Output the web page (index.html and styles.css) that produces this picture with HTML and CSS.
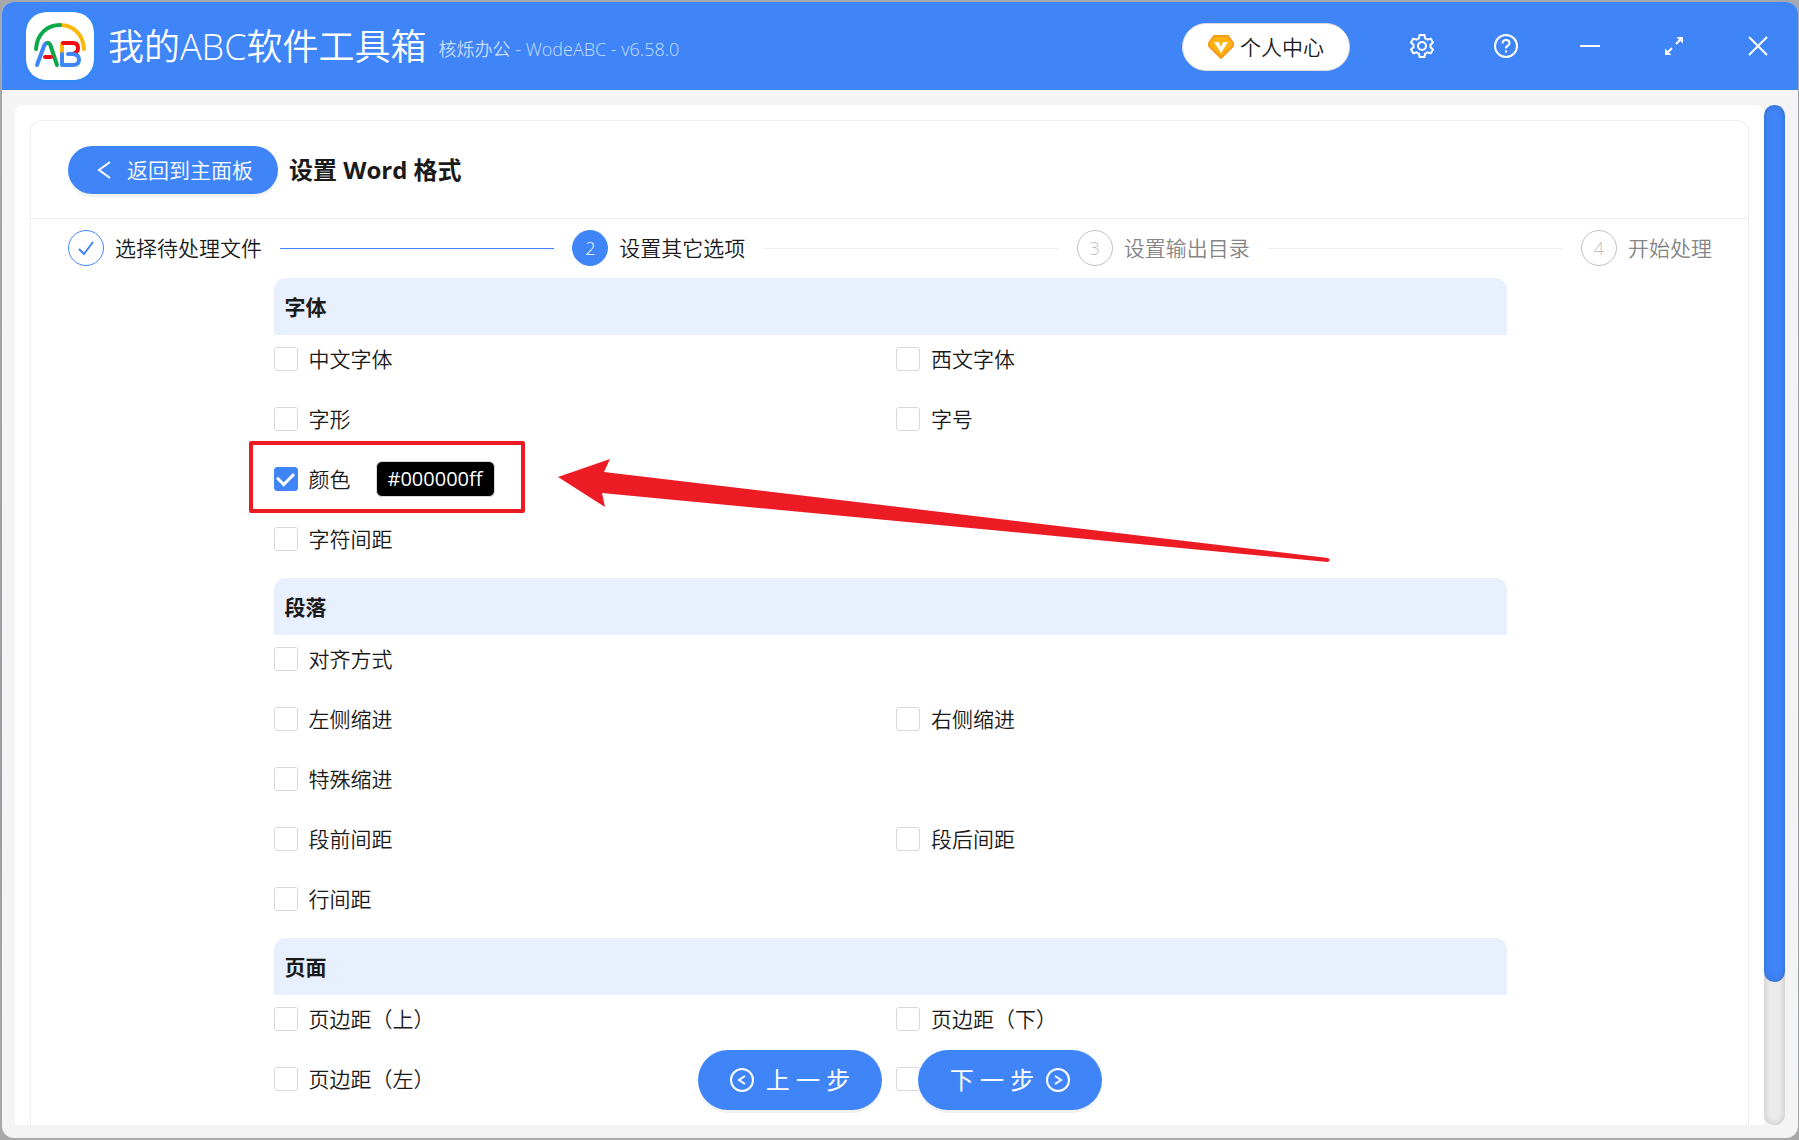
FILE: index.html
```html
<!DOCTYPE html>
<html lang="zh-CN">
<head>
<meta charset="utf-8">
<title>我的ABC软件工具箱</title>
<link rel="stylesheet" href="styles.css">
</head>
<body>
<div class="window">
  <header class="titlebar">
    <svg class="logo" viewBox="0 0 68 68" aria-hidden="true">
      <rect width="68" height="68" rx="20" fill="#fff"/>
      <g fill="none" stroke-width="4" stroke-linecap="round" stroke-linejoin="round">
        <path d="M34 13c13 0 23 9 24 24" stroke="#fbb80b"/>
        <path d="M10 37c1-15 11-24 24-24" stroke="#0aa84a"/>
        <path d="M11 53l7-19q1-3 4-3" stroke="#3f87f8"/>
        <path d="M22 31q2 0 3 4l6 18" stroke="#0aa84a"/>
        <path d="M19 45h6" stroke="#f20a12"/>
        <path d="M36 46v-14" stroke="#fbb80b"/>
        <path d="M37 31h10q5 0 5 5t-6 6" stroke="#f20a12"/>
        <path d="M36 42v11h11q6 0 6-5.500t-7-5.500h-4" stroke="#3f87f8"/>
      </g>
    </svg>
    <h1 class="app-name">我的ABC软件工具箱</h1>
    <span class="app-version">核烁办公 - WodeABC - v6.58.0</span>
    <button class="account" type="button">
      <svg class="gem" viewBox="0 0 26 24" aria-hidden="true">
        <path d="M6 1h14l5 7v3L13 23 1 11V8z" fill="#ffb310" stroke="#f79a1d" stroke-width="2" stroke-linejoin="round"/>
        <path d="M6 7h5l2 5 2-5h5l-7 11z" fill="#fff"/>
      </svg>
      个人中心
    </button>
    <nav class="window-tools">
      <button class="tool" type="button" aria-label="设置">
        <svg viewBox="0 0 24 24"><path d="M9.600 1h4.800l.7 3.300 2.400 1.400 3.200-1.100 2.300 4-2.500 2.200v2.400l2.500 2.200-2.300 4-3.200-1.100-2.400 1.400-.7 3.300H9.600l-.7-3.300-2.400-1.400-3.200 1.100-2.300-4 2.500-2.200v-2.400L1 8.600l2.300-4 3.200 1.100 2.400-1.400z"/><circle cx="12" cy="12" r="4"/></svg>
      </button>
      <button class="tool" type="button" aria-label="帮助">
        <svg viewBox="0 0 24 24"><circle cx="12" cy="12" r="11"/><path d="M8.500 9.500q0-3.500 3.500-3.500t3.500 3q0 2-2 3t-1.500 2.500"/><path d="M12 16.500v2"/></svg>
      </button>
      <button class="tool" type="button" aria-label="最小化">
        <svg viewBox="0 0 24 24"><path d="M2 12h20"/></svg>
      </button>
      <button class="tool" type="button" aria-label="最大化">
        <svg viewBox="0 0 24 24"><path d="M14 10l6-6M10 14l-6 6"/><path d="M14.500 3H21v6.500zM3 14.500V21h6.500z" fill="#fff" stroke="none"/></svg>
      </button>
      <button class="tool" type="button" aria-label="关闭">
        <svg viewBox="0 0 24 24"><path d="M3 3l18 18M21 3L3 21"/></svg>
      </button>
    </nav>
  </header>

  <main class="workspace">
    <div class="panel">
      <div class="card">
        <div class="card-head">
          <button class="back" type="button">
            <svg viewBox="0 0 24 24" aria-hidden="true"><path d="M17 4l-11 8 11 8"/></svg>
            返回到主面板
          </button>
          <h2 class="card-title">设置 Word 格式</h2>
        </div>

        <div class="card-body">
          <ol class="steps">
            <li class="step step-done">
              <span class="step-dot"><svg viewBox="0 0 20 20" aria-label="已完成"><path d="M3 11l5 5L17 4"/></svg></span>
              <span class="step-name">选择待处理文件</span>
            </li>
            <li class="step step-active">
              <span class="step-dot">2</span>
              <span class="step-name">设置其它选项</span>
            </li>
            <li class="step">
              <span class="step-dot">3</span>
              <span class="step-name">设置输出目录</span>
            </li>
            <li class="step">
              <span class="step-dot">4</span>
              <span class="step-name">开始处理</span>
            </li>
          </ol>

          <form class="options">
            <section>
              <h3 class="group-title">字体</h3>
              <div class="group">
                <label class="option"><input type="checkbox">中文字体</label>
                <label class="option"><input type="checkbox">西文字体</label>
                <label class="option"><input type="checkbox">字形</label>
                <label class="option"><input type="checkbox">字号</label>
                <div class="option wide">
                  <label class="option"><input type="checkbox" checked>颜色</label>
                  <button class="swatch" type="button">#000000ff</button>
                  <span class="callout-box"></span>
                  <svg class="callout-arrow" viewBox="0 0 773 106" aria-hidden="true"><path d="M1 19L53 1l-6 13 724 86q3 2 0 4L45 35l3 14z" fill="#ed1c24"/></svg>
                </div>
                <label class="option wide"><input type="checkbox">字符间距</label>
              </div>
            </section>
            <section>
              <h3 class="group-title">段落</h3>
              <div class="group">
                <label class="option wide"><input type="checkbox">对齐方式</label>
                <label class="option"><input type="checkbox">左侧缩进</label>
                <label class="option"><input type="checkbox">右侧缩进</label>
                <label class="option wide"><input type="checkbox">特殊缩进</label>
                <label class="option"><input type="checkbox">段前间距</label>
                <label class="option"><input type="checkbox">段后间距</label>
                <label class="option wide"><input type="checkbox">行间距</label>
              </div>
            </section>
            <section>
              <h3 class="group-title">页面</h3>
              <div class="group">
                <label class="option"><input type="checkbox">页边距（上）</label>
                <label class="option"><input type="checkbox">页边距（下）</label>
                <label class="option"><input type="checkbox">页边距（左）</label>
                <label class="option"><input type="checkbox" aria-label="页边距（右）"></label>
              </div>
            </section>
          </form>
        </div>
      </div>
    </div>
    <div class="scroll-track"><div class="scroll-thumb"></div></div>
  </main>

  <div class="pager">
    <button class="pager-button" type="button">
      <svg viewBox="0 0 24 24" aria-hidden="true"><circle cx="12" cy="12" r="11"/><path d="M15 8l-6 4 6 4"/></svg>
      上 一 步
    </button>
    <button class="pager-button" type="button">
      下 一 步
      <svg viewBox="0 0 24 24" aria-hidden="true"><circle cx="12" cy="12" r="11"/><path d="M9 8l6 4-6 4"/></svg>
    </button>
  </div>
</div>
</body>
</html>
```
FILE: styles.css
```css
:root {
  --blue: #3f85f8;
  --ink: #1a1a1a;
  --line: #eee;
  --font: "Open Sans", "Noto Sans CJK SC", sans-serif;
}

* {
  box-sizing: border-box;
}

body {
  margin: 0;
  height: 100vh;
  padding: 2px 1px 2px 2px;
  background: linear-gradient(#a5a9ae, #989ca2 70%, #a9a9a9);
  font: 350 21px/30px var(--font);
  color: var(--ink);
}

button {
  border: 0;
  margin: 0;
  font: inherit;
  color: inherit;
  cursor: pointer;
}

h1, h2, h3, ol {
  margin: 0;
  padding: 0;
}

svg {
  display: block;
  flex: none;
  fill: none;
  stroke: currentColor;
  stroke-width: 2;
}

.window {
  position: relative;
  display: flex;
  flex-direction: column;
  height: 100%;
  overflow: hidden;
  border-radius: 12px;
  background: #f4f4f4;
}

/* Title bar */
.titlebar {
  display: flex;
  align-items: center;
  flex: none;
  height: 88px;
  padding: 0 28px 0 24px;
  background: var(--blue);
  color: #fff;
}

.logo {
  width: 68px;
  height: 68px;
  border-radius: 20px;
  stroke: none;
  box-shadow: 0 0 4px #1e90ff;
}

.app-name {
  margin: 2px 0 0 14px;
  font-size: 36px;
  line-height: 48px;
  font-weight: 350;
  white-space: nowrap;
}

.app-version {
  margin: 6px auto 0 12px;
  font-size: 18px;
  white-space: nowrap;
  color: #c8ddfd;
}

.account {
  display: flex;
  align-items: center;
  gap: 6px;
  flex: none;
  height: 48px;
  margin: 2px 60px 0 0;
  padding: 0 25px;
  border: 1px solid #d9d9d9;
  border-radius: 24px;
  background: #fff;
  color: var(--ink);
}

.gem {
  width: 26px;
  height: 24px;
  stroke: none;
}

.window-tools {
  display: flex;
  gap: 60px;
}

.tool {
  padding: 0;
  background: none;
}

.tool svg {
  width: 24px;
  height: 24px;
}

/* Scrolling workspace */
.workspace {
  display: flex;
  flex: 1;
  min-height: 0;
  padding: 15px 13px 13px;
}

.panel {
  flex: 1;
  overflow-y: auto;
  scrollbar-width: none;
  padding: 15px 15px 0;
  border-radius: 8px 8px 0 0;
  background: #fff;
}

.card {
  min-height: 100%;
  border: 1px solid var(--line);
  border-bottom: 0;
  border-radius: 12px 12px 0 0;
}

.card-head {
  display: flex;
  align-items: center;
  gap: 11px;
  height: 98px;
  padding: 0 37px;
  border-bottom: 1px solid var(--line);
}

.back {
  display: flex;
  align-items: center;
  gap: 10px;
  height: 48px;
  padding: 0 25px;
  border-radius: 24px;
  background: var(--blue);
  color: #fff;
  box-shadow: 0 3px 0 #f2f2f2;
}

.back svg {
  width: 24px;
  height: 24px;
}

.card-title {
  font-size: 24px;
  font-weight: 700;
}

.card-body {
  padding: 11px 36px 0 37px;
}

/* Steps */
.steps {
  display: flex;
  gap: 18px;
  margin-bottom: 12px;
  list-style: none;
}

.step {
  display: flex;
  align-items: center;
  flex: 1;
  color: #858585;
}

.step:last-child {
  flex: none;
}

.step:not(:last-child)::after {
  content: "";
  flex: 1;
  height: 1px;
  margin-left: 18px;
  background: var(--line);
}

.step-dot {
  display: grid;
  place-items: center;
  width: 36px;
  height: 36px;
  margin-right: 11px;
  border: 1px solid #bfbfbf;
  border-radius: 50%;
  font-size: 18px;
  color: #bfbfbf;
}

.step-dot svg {
  width: 20px;
  height: 20px;
}

.step-name {
  white-space: nowrap;
}

.step-done,
.step-active {
  color: var(--ink);
}

.step-done .step-dot {
  border-color: var(--blue);
  color: var(--blue);
}

.step.step-done::after {
  background: var(--blue);
}

.step-active .step-dot {
  border-color: var(--blue);
  background: var(--blue);
  color: #fff;
}

/* Option groups */
.options {
  width: 75%;
  margin: 0 auto;
}

.group-title {
  height: 57px;
  padding: 0 11px;
  border-radius: 12px 12px 0 0;
  background: #e8effd;
  font-size: 21px;
  line-height: 58px;
  font-weight: 700;
}

.group {
  display: grid;
  grid-template-columns: 1fr 1fr;
  gap: 12px;
  padding-bottom: 15px;
}

.option {
  position: relative;
  display: flex;
  align-items: center;
  gap: 11px;
  height: 48px;
}

.wide {
  grid-column: 1 / -1;
  gap: 25px;
}

label.wide {
  gap: 11px;
}

input[type="checkbox"] {
  appearance: none;
  display: grid;
  place-items: center;
  width: 24px;
  height: 24px;
  margin: 0;
  border: 1px solid #d9d9d9;
  border-radius: 3px;
  background: #fff;
}

input[type="checkbox"]:checked {
  border-color: var(--blue);
  background: var(--blue);
}

input[type="checkbox"]:checked::after {
  content: "";
  width: 8px;
  height: 13px;
  margin-bottom: 4px;
  border: solid #fff;
  border-width: 0 3px 3px 0;
  transform: rotate(45deg);
}

.swatch {
  height: 36px;
  padding: 0 11px;
  border: 1px solid #d9d9d9;
  border-radius: 6px;
  background: #000;
  font-size: 20px;
  line-height: 30px;
  font-weight: 400;
  color: #fff;
}

/* Red annotations drawn over the colour row */
.callout-box {
  position: absolute;
  left: -25px;
  top: -14px;
  width: 276px;
  height: 72px;
  border: 4px solid #ed1c24;
  border-radius: 2px;
  pointer-events: none;
}

.callout-arrow {
  position: absolute;
  left: 283px;
  top: 3px;
  width: 773px;
  height: 106px;
  stroke: none;
  pointer-events: none;
}

/* Scroll bar */
.scroll-track {
  width: 21px;
  border-radius: 12px;
  background: #ebebeb;
  box-shadow: inset 0 0 6px rgba(0, 0, 0, .2);
}

.scroll-thumb {
  height: 86%;
  border-radius: 12px;
  background: var(--blue);
  box-shadow: inset 0 0 6px rgba(0, 0, 0, .2);
}

/* Floating previous / next buttons */
.pager {
  position: absolute;
  left: 0;
  right: 0;
  bottom: 28px;
  display: flex;
  justify-content: center;
  gap: 36px;
}

.pager-button {
  display: flex;
  align-items: center;
  justify-content: center;
  gap: 12px;
  width: 184px;
  height: 60px;
  padding: 0;
  border-radius: 30px;
  background: var(--blue);
  font-size: 24px;
  font-weight: 400;
  color: #fff;
  box-shadow: 0 3px 0 #f2f2f2;
}

.pager-button svg {
  width: 24px;
  height: 24px;
}
```
